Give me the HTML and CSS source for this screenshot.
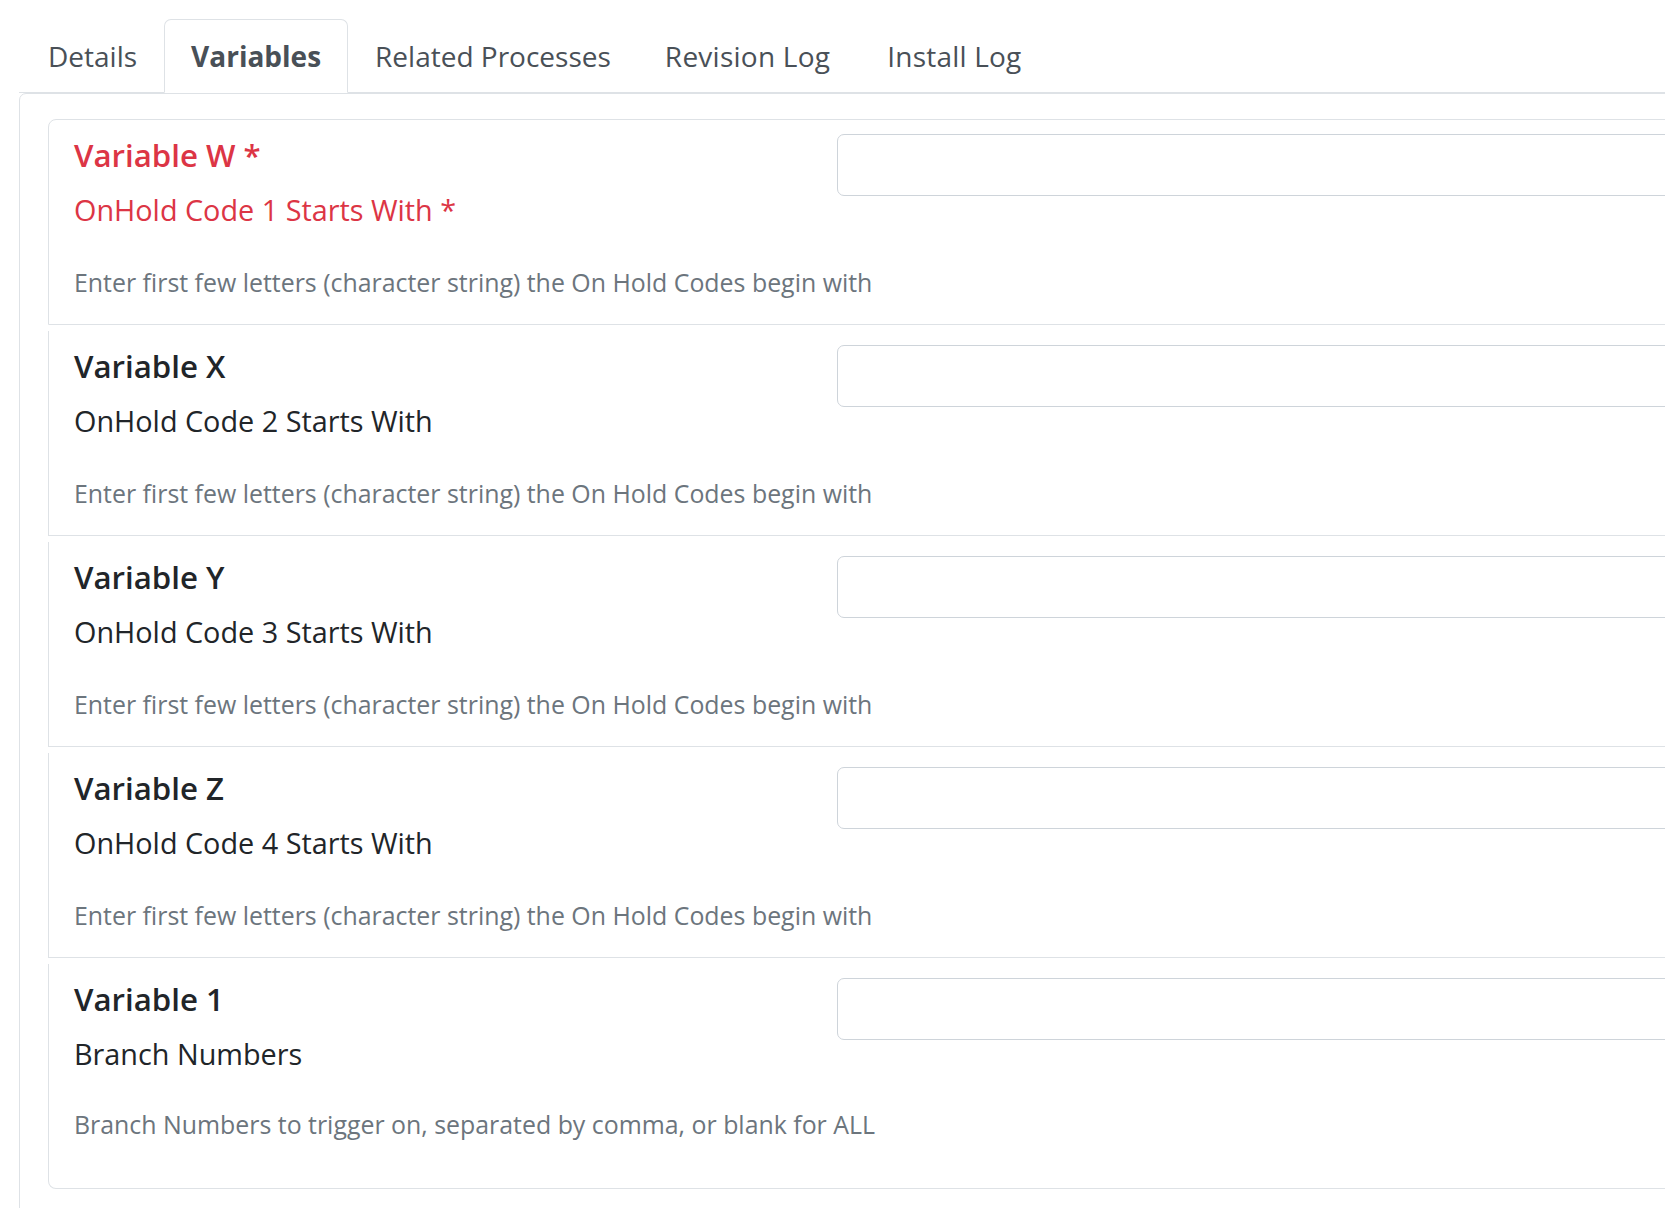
FILE: index.html
```html
<!DOCTYPE html>
<html>
<head>
	<title>Process Variables</title>
	<link rel="stylesheet" href="styles.css">
</head>
<body>
	<div class="page">
		<ul class="tabs">
			<li><a class="tab" href="#">Details</a></li>
			<li><a class="tab active" href="#">Variables</a></li>
			<li><a class="tab" href="#">Related Processes</a></li>
			<li><a class="tab" href="#">Revision Log</a></li>
			<li><a class="tab" href="#">Install Log</a></li>
		</ul>
		<div class="tab-pane">
			<div class="var-list">
				<div class="var-row required">
					<div class="var-info">
						<h5 class="var-name">Variable W *</h5>
						<label class="var-label" for="var-w">OnHold Code 1 Starts With *</label>
					</div>
					<input class="field" type="text" id="var-w">
					<small class="var-help">Enter first few letters (character string) the On Hold Codes begin with</small>
				</div>
				<div class="var-row">
					<div class="var-info">
						<h5 class="var-name">Variable X</h5>
						<label class="var-label" for="var-x">OnHold Code 2 Starts With</label>
					</div>
					<input class="field" type="text" id="var-x">
					<small class="var-help">Enter first few letters (character string) the On Hold Codes begin with</small>
				</div>
				<div class="var-row">
					<div class="var-info">
						<h5 class="var-name">Variable Y</h5>
						<label class="var-label" for="var-y">OnHold Code 3 Starts With</label>
					</div>
					<input class="field" type="text" id="var-y">
					<small class="var-help">Enter first few letters (character string) the On Hold Codes begin with</small>
				</div>
				<div class="var-row">
					<div class="var-info">
						<h5 class="var-name">Variable Z</h5>
						<label class="var-label" for="var-z">OnHold Code 4 Starts With</label>
					</div>
					<input class="field" type="text" id="var-z">
					<small class="var-help">Enter first few letters (character string) the On Hold Codes begin with</small>
				</div>
				<div class="var-row">
					<div class="var-info">
						<h5 class="var-name">Variable 1</h5>
						<label class="var-label" for="var-1">Branch Numbers</label>
					</div>
					<input class="field" type="text" id="var-1">
					<small class="var-help">Branch Numbers to trigger on, separated by comma, or blank for ALL</small>
				</div>
			</div>
		</div>
	</div>
</body>
</html>
```

FILE: styles.css
```css
html, body {
	overflow: hidden;
}

body {
	margin: 0;
	padding: 0;
	background-color: #fff;
	font-family: "Open Sans", "Noto Sans", Arial, sans-serif;
	color: #212529;
}

.page {
	width: 2200px;
	padding: 19px 0 0 19px;
}

/* tab strip */
.tabs {
	display: flex;
	margin: 0;
	padding: 0 0 0 2px;
	list-style: none;
	border-bottom: 1px solid #dee2e6;
}

.tab {
	display: block;
	margin-bottom: -1px;
	padding: 15px 26px;
	font-size: 28px;
	line-height: 1.5;
	color: #495057;
	text-decoration: none;
	border: 1px solid transparent;
	border-top-left-radius: 7px;
	border-top-right-radius: 7px;
}

.tab.active {
	font-weight: 700;
	background-color: #fff;
	border-color: #dee2e6 #dee2e6 #fff;
}

.tabs li:nth-child(4) .tab {
	padding-right: 26px;
	letter-spacing: 0.25px;
}

.tabs li:last-child .tab {
	margin-left: 3px;
	letter-spacing: 0.2px;
}

/* variables pane */
.tab-pane {
	padding: 25px 0 60px 28px;
	border: 1px solid #dee2e6;
	border-top-left-radius: 7px;
}

.var-row {
	display: grid;
	grid-template-columns: 763px 1fr;
	grid-template-areas:
		"info field"
		"help help";
	align-items: start;
	padding: 14px 25px 23px;
	border: 1px solid #dee2e6;
	border-top-width: 0;
}

.var-row + .var-row {
	margin-top: 6px;
}

.var-row:first-child {
	border-top-width: 1px;
	border-top-left-radius: 8px;
}

.var-row:last-child {
	padding-bottom: 45px;
	border-bottom-left-radius: 8px;
}

.var-info {
	grid-area: info;
}

.var-name {
	margin: 3px 0 14px;
	font-size: 31.2px;
	font-weight: 600;
	line-height: 1.2;
}

.var-label {
	display: block;
	font-size: 28.8px;
	line-height: 1.5;
}

.var-help {
	grid-area: help;
	display: block;
	margin-top: 32px;
	font-size: 24.9px;
	line-height: 1.5;
	color: #6c757d;
}

.var-row:last-child .var-help {
	margin-top: 30px;
}

.required .var-name,
.required .var-label {
	color: #dc3545;
}

.field {
	grid-area: field;
	box-sizing: border-box;
	width: 100%;
	height: 62px;
	margin: 0;
	padding: 0 18px;
	font-family: inherit;
	font-size: 27px;
	color: #495057;
	background-color: #fff;
	border: 1px solid #ced4da;
	border-radius: 7px;
}
```
